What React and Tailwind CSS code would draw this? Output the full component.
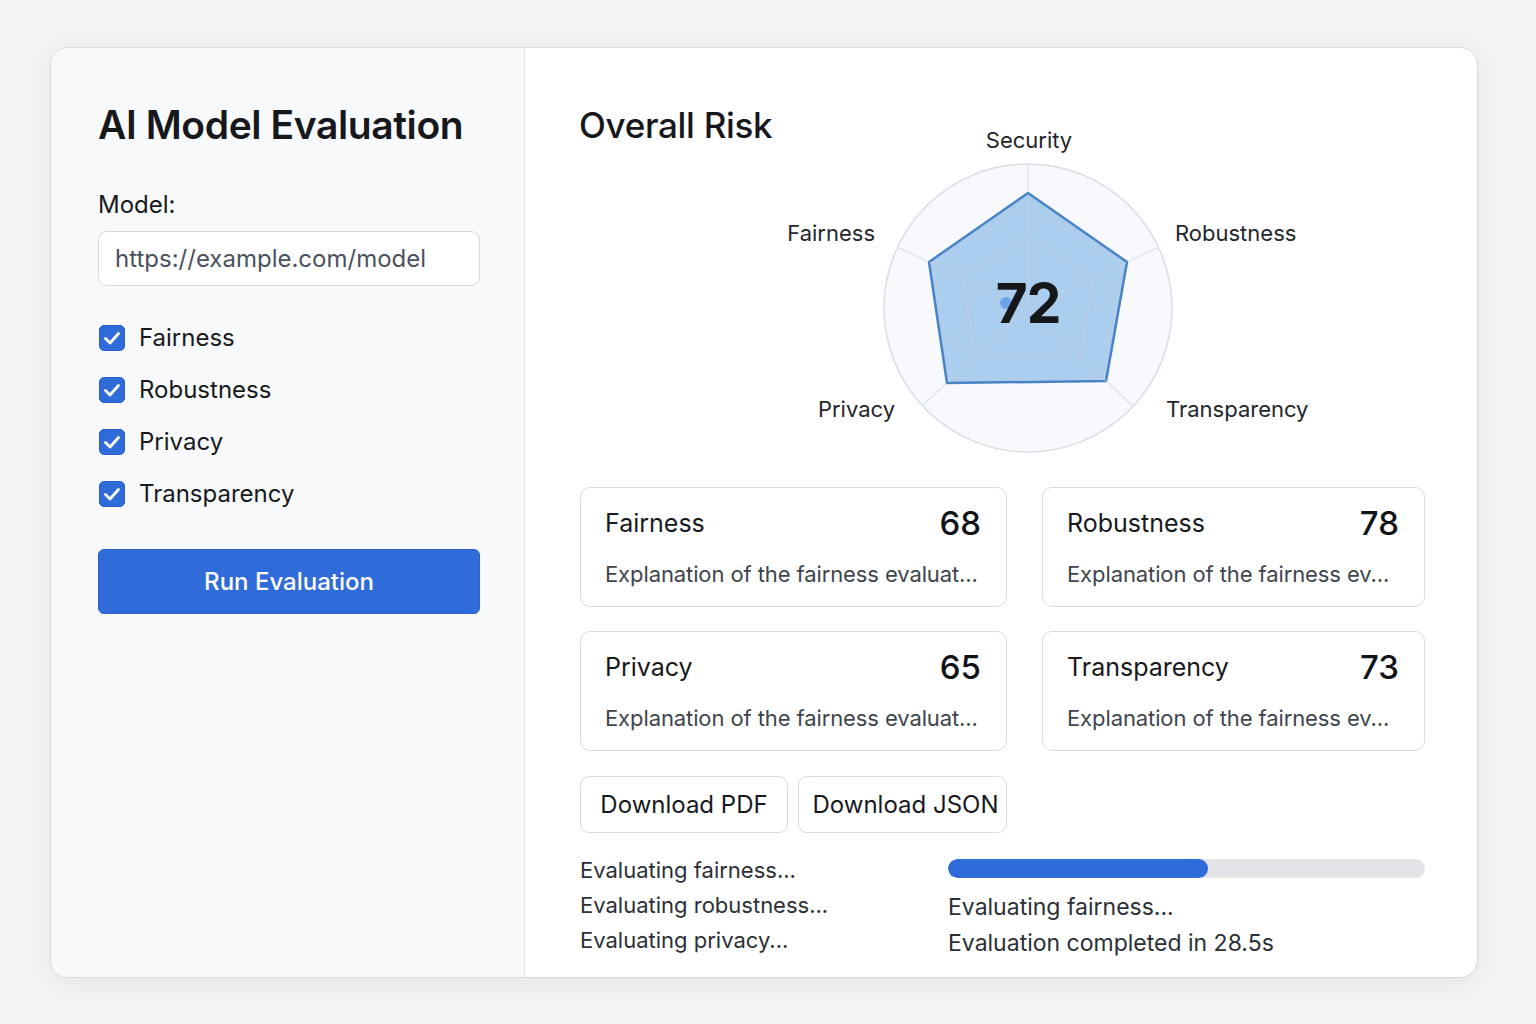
import React from "react";

function Check() {
  return (
    <span className="flex h-[26px] w-[26px] shrink-0 items-center justify-center rounded-[5px] border border-[#2a5fc9] bg-[#2f6bd9]">
      <svg width="20" height="20" viewBox="0 0 20 20" fill="none">
        <path d="M3.5 10.5 L8 15 L16.5 5.5" stroke="white" strokeWidth="2.8" strokeLinecap="round" strokeLinejoin="round" />
      </svg>
    </span>
  );
}

function Radar() {
  const c = [247, 188];
  const dirs = [
    [0, -1],
    [0.907, -0.421],
    [0.731, 0.682],
    [-0.734, 0.679],
    [-0.907, -0.421],
  ];
  const pt = (d, r) => `${(c[0] + d[0] * r).toFixed(1)},${(c[1] + d[1] * r).toFixed(1)}`;
  const grid = (r) => dirs.map((d) => pt(d, r)).join(" ");
  const poly = "247,73 346,142 325,261 166,263 148,142";
  return (
    <svg width="560" height="340" viewBox="0 0 560 340" className="block" style={{ fontFamily: "Inter, 'Noto Sans', sans-serif" }}>
      <circle cx={c[0]} cy={c[1]} r="144" fill="#f7f9fc" stroke="#d8dde6" strokeWidth="1.5" />
      {dirs.map((d, i) => (
        <line key={i} x1={c[0]} y1={c[1]} x2={c[0] + d[0] * 144} y2={c[1] + d[1] * 144} stroke="#dde2ea" strokeWidth="1.2" />
      ))}
      <polygon points={poly} fill="#abcdee" stroke="#4a84c6" strokeWidth="2.5" strokeLinejoin="round" />
      <polygon points={grid(72)} fill="none" stroke="#bcd0e8" strokeWidth="1.3" />
      <polygon points={grid(104)} fill="none" stroke="#bcd0e8" strokeWidth="1" opacity="0.7" />
      {dirs.map((d, i) => (
        <line key={"s" + i} x1={c[0]} y1={c[1]} x2={c[0] + d[0] * 108} y2={c[1] + d[1] * 108} stroke="#bcd0e8" strokeWidth="1" />
      ))}
      <circle cx="225" cy="183" r="6" fill="#6aa4ea" />
      <text x="247" y="203" textAnchor="middle" fontSize="55" fontWeight="700" fill="#15171b" letterSpacing="-1">72</text>
      <g fontSize="22" fill="#23262c">
        <text x="248" y="28" textAnchor="middle">Security</text>
        <text x="94" y="121" textAnchor="end">Fairness</text>
        <text x="394" y="121">Robustness</text>
        <text x="114" y="297" textAnchor="end">Privacy</text>
        <text x="385" y="297">Transparency</text>
      </g>
    </svg>
  );
}

function ScoreCard({ title, score, text }) {
  return (
    <div className="rounded-[10px] border-[1.5px] border-[#d6dce4] bg-white pl-[24px] pr-[25px] pt-[17px] pb-[18px]">
      <div className="flex h-[38px] items-center justify-between">
        <span className="text-[25px] text-[#17191d]">{title}</span>
        <span className="text-[33px] font-medium text-[#111317]">{score}</span>
      </div>
      <div className="mt-[17px] overflow-hidden whitespace-nowrap text-[22px] leading-[28px] tracking-[-0.1px] text-[#40454d]">{text}</div>
    </div>
  );
}

export default function App() {
  const checks = ["Fairness", "Robustness", "Privacy", "Transparency"];
  return (
    <div className="min-h-[1024px] w-[1536px] bg-[#f3f3f4] pt-[47px] pl-[50px]" style={{ fontFamily: "Inter, 'Noto Sans', sans-serif" }}>
      <div className="flex h-[931px] w-[1428px] overflow-hidden rounded-[18px] border border-[#d6dae1] bg-white shadow-[0_4px_24px_rgba(0,0,0,0.06)]">
        {/* Left panel */}
        <div className="w-[474px] shrink-0 border-r border-[#dfe3e9] bg-[#f8f9fb] pl-[47px] pr-[44px] pt-[54px]">
          <h1 className="text-[39px] font-semibold leading-[46px] tracking-[-0.4px] text-[#16181c]">AI Model Evaluation</h1>
          <div className="mt-[42px] text-[24px] leading-[30px] text-[#17191d]">Model:</div>
          <div className="mt-[11px] flex h-[55px] items-center rounded-[9px] border-[1.5px] border-[#d5d9e0] bg-white pl-[16px] text-[24px] text-[#4a5260]">
            https://example.com/model
          </div>
          <div className="mt-[37px] flex flex-col gap-[22px]">
            {checks.map((c) => (
              <div key={c} className="flex h-[30px] items-center gap-[14px] pl-[1px]">
                <Check />
                <span className="text-[24px] text-[#17191d]">{c}</span>
              </div>
            ))}
          </div>
          <button className="mt-[40px] flex h-[65px] w-full items-center justify-center rounded-[6px] border border-[#2a60c8] bg-[#2f6bd9] text-[24px] font-medium text-white">
            Run Evaluation
          </button>
        </div>

        {/* Right panel */}
        <div className="flex-1 pl-[55px] pr-[52px] pt-[54px]">
          <div className="flex items-start">
            <h2 className="-ml-[1px] w-[202px] shrink-0 whitespace-nowrap text-[35px] font-medium leading-[46px] tracking-[-0.3px] text-[#16181c]">Overall Risk</h2>
            <div className="mt-[18px]">
              <Radar />
            </div>
          </div>

          <div className="mt-[27px] grid grid-cols-[427px_383px] gap-x-[35px] gap-y-[24px]">
            <ScoreCard title="Fairness" score="68" text="Explanation of the fairness evaluat..." />
            <ScoreCard title="Robustness" score="78" text="Explanation of the fairness ev..." />
            <ScoreCard title="Privacy" score="65" text="Explanation of the fairness evaluat..." />
            <ScoreCard title="Transparency" score="73" text="Explanation of the fairness ev..." />
          </div>

          <div className="mt-[25px] flex gap-[10px]">
            <button className="h-[57px] w-[208px] rounded-[9px] border-[1.5px] border-[#d6dce4] bg-white text-[24px] text-[#17191d]">Download PDF</button>
            <button className="h-[57px] w-[209px] rounded-[9px] border-[1.5px] border-[#d6dce4] bg-white pl-[6px] text-[24px] text-[#17191d]">Download JSON</button>
          </div>

          <div className="mt-[20px] flex">
            <div className="w-[368px] shrink-0 text-[22px] leading-[35px] text-[#2b2f36]">
              <div>Evaluating fairness...</div>
              <div>Evaluating robustness...</div>
              <div>Evaluating privacy...</div>
            </div>
            <div className="flex-1">
              <div className="mt-[6px] h-[19px] w-full overflow-hidden rounded-full bg-[#e2e4e8]">
                <div className="h-full rounded-full bg-[#2f6bd9]" style={{ width: "54.6%" }} />
              </div>
              <div className="mt-[11px] text-[23px] leading-[36px] text-[#2b2f36]">
                <div>Evaluating fairness...</div>
                <div>Evaluation completed in 28.5s</div>
              </div>
            </div>
          </div>
        </div>
      </div>
    </div>
  );
}
